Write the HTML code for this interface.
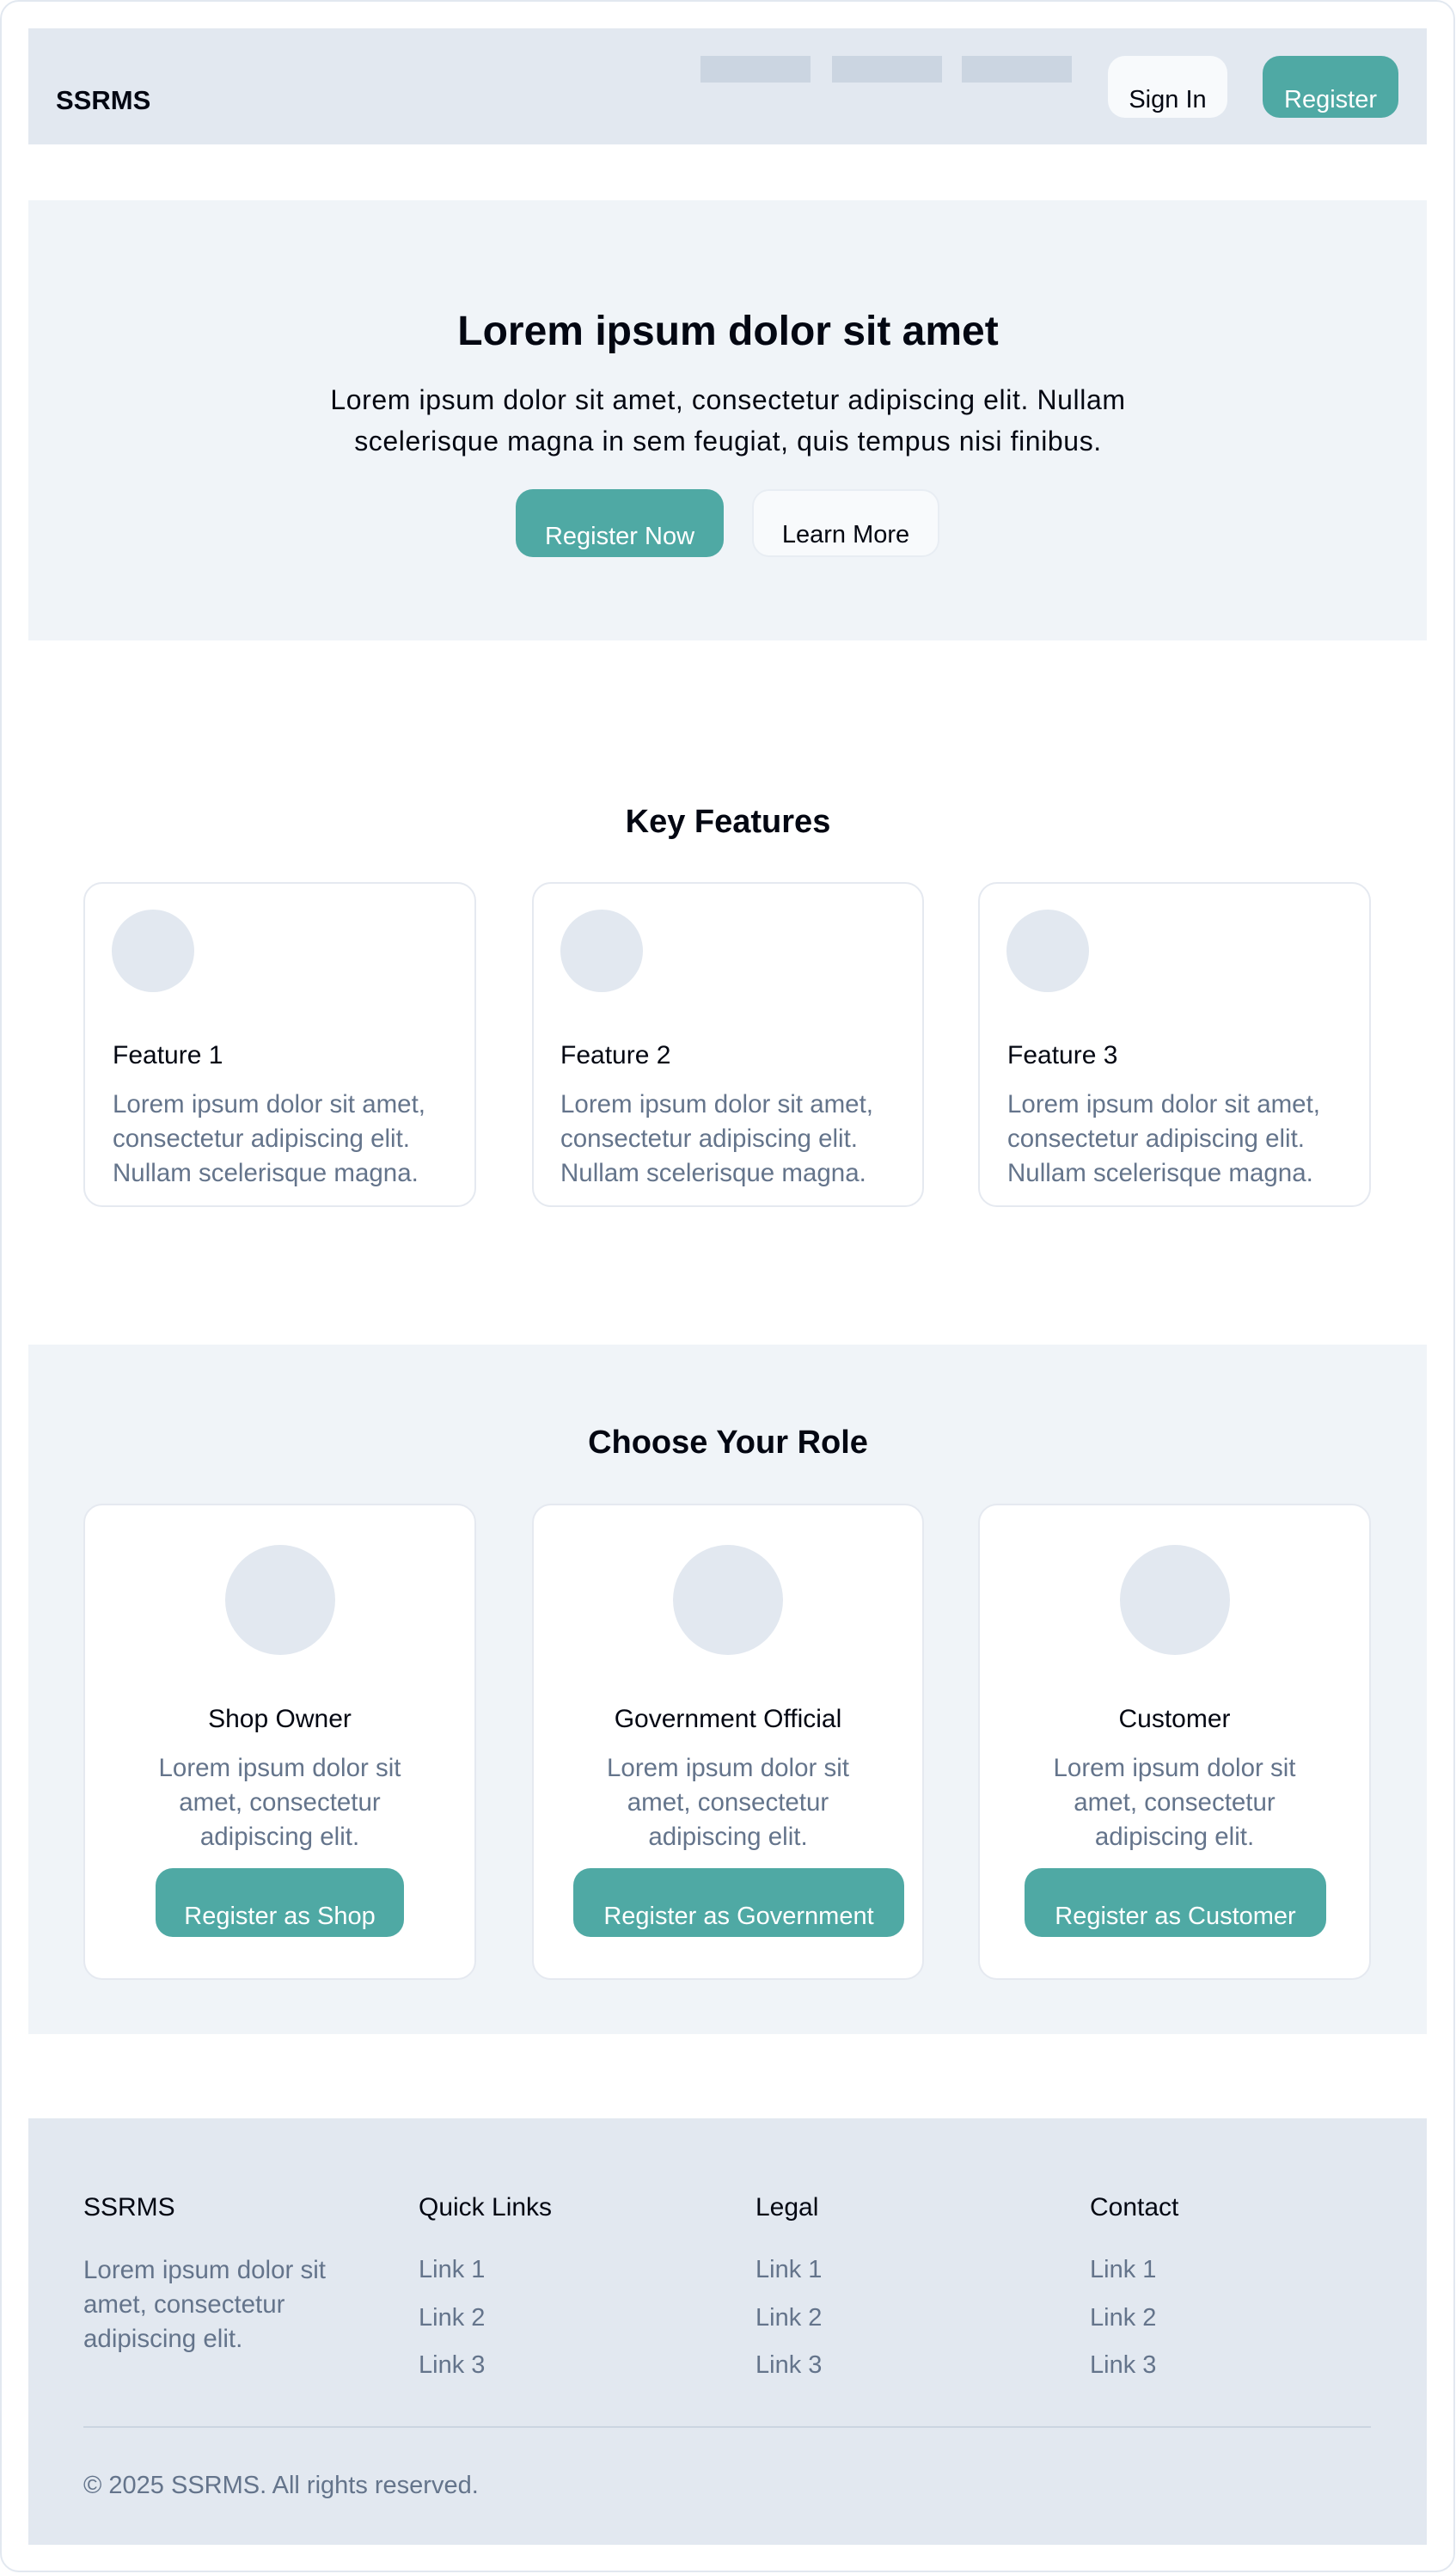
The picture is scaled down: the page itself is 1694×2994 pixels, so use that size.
<!DOCTYPE html>
<html><head><meta charset="utf-8"><style>
*{margin:0;padding:0;box-sizing:border-box}
html,body{width:1694px;height:2994px;background:#fff;font-family:"Liberation Sans",Arial,sans-serif;color:#030712;overflow:hidden}
.abs{position:absolute}
.frame{position:absolute;left:0;top:0;width:1693px;height:2992px;border:2px solid #e2e8f0;border-radius:22px}
.btn{position:absolute;display:flex;align-items:flex-end;justify-content:center;padding-bottom:7px;border-radius:20px;font-size:29px;white-space:nowrap}
.teal{background:#4fa9a4;color:#fff}
.light{background:#f8fafc;color:#030712;border:2px solid #e8edf3}
.card{position:absolute;background:#fff;border:2px solid #e5e9f0;border-radius:22px}
.circ{position:absolute;border-radius:50%;background:#e2e8f0}
.c{text-align:center}
.t{position:absolute;white-space:nowrap;line-height:1}
.gray{color:#64748b}
.d{font-size:29.5px;line-height:40px}
</style></head><body>
<div class="frame"></div>
<div class="abs" style="left:33px;top:33px;width:1627px;height:135px;background:#e2e8f0"></div>
<div class="t" style="left:65px;top:101px;font-size:31px;font-weight:bold">SSRMS</div>
<div class="abs" style="left:815px;top:65px;width:128px;height:31px;background:#cbd5e1"></div>
<div class="abs" style="left:968px;top:65px;width:128px;height:31px;background:#cbd5e1"></div>
<div class="abs" style="left:1119px;top:65px;width:128px;height:31px;background:#cbd5e1"></div>
<div class="btn" style="left:1289px;top:65px;width:139px;height:72px;background:#f8fafc;padding-bottom:4px">Sign In</div>
<div class="btn teal" style="left:1469px;top:65px;width:158px;height:72px;padding-bottom:4px">Register</div>

<div class="abs" style="left:33px;top:233px;width:1627px;height:512px;background:#f0f4f8"></div>
<div class="t c" style="left:0;width:1694px;top:362px;font-size:48px;font-weight:bold">Lorem ipsum dolor sit amet</div>
<div class="abs c" style="left:0;width:1694px;top:441px;font-size:32px;line-height:48px;letter-spacing:0.6px">Lorem ipsum dolor sit amet, consectetur adipiscing elit. Nullam<br>scelerisque magna in sem feugiat, quis tempus nisi finibus.</div>
<div class="btn teal" style="left:600px;top:569px;width:242px;height:79px">Register Now</div>
<div class="btn light" style="left:875px;top:569px;width:218px;height:79px">Learn More</div>

<div class="t c" style="left:0;width:1694px;top:937px;font-size:38px;font-weight:bold">Key Features</div>
<div class="card" style="left:97px;top:1026px;width:457px;height:378px"></div>
<div class="card" style="left:619px;top:1026px;width:456px;height:378px"></div>
<div class="card" style="left:1138px;top:1026px;width:457px;height:378px"></div>
<div class="circ" style="left:130px;top:1058px;width:96px;height:96px"></div>
<div class="circ" style="left:652px;top:1058px;width:96px;height:96px"></div>
<div class="circ" style="left:1171px;top:1058px;width:96px;height:96px"></div>
<div class="t" style="left:131px;top:1213px;font-size:30px">Feature 1</div>
<div class="t" style="left:652px;top:1213px;font-size:30px">Feature 2</div>
<div class="t" style="left:1172px;top:1213px;font-size:30px">Feature 3</div>
<div class="abs gray d" style="left:131px;top:1265px">Lorem ipsum dolor sit amet,<br>consectetur adipiscing elit.<br>Nullam scelerisque magna.</div>
<div class="abs gray d" style="left:652px;top:1265px">Lorem ipsum dolor sit amet,<br>consectetur adipiscing elit.<br>Nullam scelerisque magna.</div>
<div class="abs gray d" style="left:1172px;top:1265px">Lorem ipsum dolor sit amet,<br>consectetur adipiscing elit.<br>Nullam scelerisque magna.</div>

<div class="abs" style="left:33px;top:1564px;width:1627px;height:802px;background:#f0f4f8"></div>
<div class="t c" style="left:0;width:1694px;top:1659px;font-size:38px;font-weight:bold">Choose Your Role</div>
<div class="card" style="left:97px;top:1749px;width:457px;height:554px"></div>
<div class="card" style="left:619px;top:1749px;width:456px;height:554px"></div>
<div class="card" style="left:1138px;top:1749px;width:457px;height:554px"></div>
<div class="circ" style="left:262px;top:1797px;width:128px;height:128px"></div>
<div class="circ" style="left:783px;top:1797px;width:128px;height:128px"></div>
<div class="circ" style="left:1303px;top:1797px;width:128px;height:128px"></div>
<div class="t c" style="left:97px;width:457px;top:1985px;font-size:30px">Shop Owner</div>
<div class="t c" style="left:619px;width:456px;top:1985px;font-size:30px">Government Official</div>
<div class="t c" style="left:1138px;width:457px;top:1985px;font-size:30px">Customer</div>
<div class="abs c gray d" style="left:97px;width:457px;top:2037px">Lorem ipsum dolor sit<br>amet, consectetur<br>adipiscing elit.</div>
<div class="abs c gray d" style="left:619px;width:456px;top:2037px">Lorem ipsum dolor sit<br>amet, consectetur<br>adipiscing elit.</div>
<div class="abs c gray d" style="left:1138px;width:457px;top:2037px">Lorem ipsum dolor sit<br>amet, consectetur<br>adipiscing elit.</div>
<div class="btn teal" style="left:181px;top:2173px;width:289px;height:80px">Register as Shop</div>
<div class="btn teal" style="left:667px;top:2173px;width:385px;height:80px">Register as Government</div>
<div class="btn teal" style="left:1192px;top:2173px;width:351px;height:80px">Register as Customer</div>

<div class="abs" style="left:33px;top:2464px;width:1627px;height:496px;background:#e2e8f0"></div>
<div class="t" style="left:97px;top:2553px;font-size:30px">SSRMS</div>
<div class="t" style="left:487px;top:2553px;font-size:30px">Quick Links</div>
<div class="t" style="left:879px;top:2553px;font-size:30px">Legal</div>
<div class="t" style="left:1268px;top:2553px;font-size:30px">Contact</div>
<div class="abs gray d" style="left:97px;top:2621px">Lorem ipsum dolor sit<br>amet, consectetur<br>adipiscing elit.</div>
<div class="abs gray" style="left:487px;top:2613px;font-size:29px;line-height:55.5px">Link 1<br>Link 2<br>Link 3</div>
<div class="abs gray" style="left:879px;top:2613px;font-size:29px;line-height:55.5px">Link 1<br>Link 2<br>Link 3</div>
<div class="abs gray" style="left:1268px;top:2613px;font-size:29px;line-height:55.5px">Link 1<br>Link 2<br>Link 3</div>
<div class="abs" style="left:97px;top:2822px;width:1498px;height:2px;background:#cbd5e1"></div>
<div class="t gray" style="left:97px;top:2877px;font-size:29px">© 2025 SSRMS. All rights reserved.</div>
</body></html>
